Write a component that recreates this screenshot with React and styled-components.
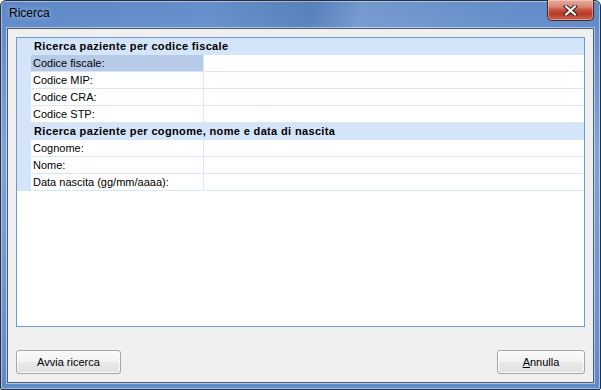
import React from 'react';
import styled, { createGlobalStyle } from 'styled-components';

const GlobalStyle = createGlobalStyle`
    html, body {
        margin: 0;
        padding: 0;
        background: #ffffff;
    }
    * {
        box-sizing: border-box;
    }
`;

const Window = styled.div`
    display: flex;
    flex-direction: column;
    width: 601px;
    height: 390px;
    padding: 0 6px 6px 6px;
    border: 1px solid #27303f;
    border-radius: 6px 6px 2px 2px;
    background: linear-gradient(
        180deg,
        #5c87c6 0px,
        #6690cd 40px,
        #7ea3d8 150px,
        #6e95cf 300px,
        #5f8ac9 390px
    );
    box-shadow: inset 0 0 0 1px rgba(255, 255, 255, 0.45);
    font-family: 'Liberation Sans', Arial, sans-serif;
`;

const TitleBar = styled.div`
    position: relative;
    display: flex;
    align-items: center;
    height: 27px;
    margin: 0 -6px;
    padding-left: 8px;
    background: linear-gradient(
        100deg,
        rgba(255, 255, 255, 0) 0%,
        rgba(255, 255, 255, 0.05) 35%,
        rgba(0, 0, 0, 0.06) 52%,
        rgba(255, 255, 255, 0.14) 60%,
        rgba(255, 255, 255, 0.06) 80%,
        rgba(255, 255, 255, 0) 100%
    );
    border-radius: 5px 5px 0 0;
`;

const Title = styled.span`
    font-size: 12px;
    color: #000000;
    padding-bottom: 3px;
    text-shadow: 0 0 6px rgba(255, 255, 255, 0.6);
`;

const CloseButton = styled.div`
    position: absolute;
    top: -1px;
    right: 6px;
    width: 47px;
    height: 21px;
    display: flex;
    align-items: center;
    justify-content: center;
    border: 1px solid #4b2420;
    border-top: none;
    border-radius: 0 0 5px 5px;
    background: linear-gradient(
        180deg,
        #e6ab9e 0%,
        #d98472 35%,
        #c64f3b 50%,
        #b63a27 70%,
        #cc6650 100%
    );
    box-shadow: inset 0 0 0 1px rgba(255, 220, 210, 0.45);
`;

const Client = styled.div`
    flex: 1;
    display: flex;
    flex-direction: column;
    padding: 8px;
    background: #f0f0f0;
    border: 1px solid #4d5a70;
    box-shadow: 0 0 0 1px rgba(255, 255, 255, 0.5);
`;

const Panel = styled.div`
    height: 290px;
    border: 1px solid #6f9ad6;
    background: #ffffff;
`;

const SectionRow = styled.div`
    height: 17px;
    line-height: 16px;
    padding-left: 17px;
    background: #d5e5f9;
    border-bottom: 1px solid #d5e5f9;
    font-size: 11px;
    font-weight: bold;
    letter-spacing: 0.35px;
    color: #000000;
    white-space: nowrap;
`;

const Row = styled.div`
    display: flex;
    height: 17px;
    border-bottom: 1px solid #d9e6f7;
`;

const Strip = styled.div`
    width: 14px;
    margin-bottom: -1px;
    background: #d5e5f9;
`;

const LabelCell = styled.div`
    width: 173px;
    padding-left: 2px;
    line-height: 16px;
    font-size: 11px;
    color: #000000;
    white-space: nowrap;
    border-right: 1px solid #d9e6f7;
    background: ${(props) => (props.selected ? '#b7cbe8' : '#ffffff')};
`;

const ValueCell = styled.div`
    flex: 1;
`;

const Footer = styled.div`
    display: flex;
    justify-content: space-between;
    margin-top: 23px;
`;

const Button = styled.button`
    width: ${(props) => props.width}px;
    height: 24px;
    padding: 0;
    border: 1px solid #a6a6a6;
    border-radius: 3px;
    background: linear-gradient(
        180deg,
        #fbfbfb 0%,
        #f3f3f3 48%,
        #e9e9e9 52%,
        #e2e2e2 100%
    );
    box-shadow: inset 0 0 0 1px rgba(255, 255, 255, 0.8);
    font-family: 'Liberation Sans', Arial, sans-serif;
    font-size: 11px;
    color: #000000;
`;

const fiscalFields = ['Codice fiscale:', 'Codice MIP:', 'Codice CRA:', 'Codice STP:'];
const personFields = ['Cognome:', 'Nome:', 'Data nascita (gg/mm/aaaa):'];

const FieldRow = ({ label, selected }) => (
    <Row>
        <Strip />
        <LabelCell selected={selected}>{label}</LabelCell>
        <ValueCell />
    </Row>
);

const CloseGlyph = () => (
    <svg width="15" height="11" viewBox="0 0 15 11">
        <path
            d="M3 1.5 L12 9.5 M12 1.5 L3 9.5"
            stroke="#3a2320"
            strokeWidth="4"
            strokeLinecap="square"
        />
        <path
            d="M3 1.5 L12 9.5 M12 1.5 L3 9.5"
            stroke="#ffffff"
            strokeWidth="2"
            strokeLinecap="square"
        />
    </svg>
);

const App = () => (
    <>
        <GlobalStyle />
        <Window>
            <TitleBar>
                <Title>Ricerca</Title>
                <CloseButton>
                    <CloseGlyph />
                </CloseButton>
            </TitleBar>
            <Client>
                <Panel>
                    <SectionRow>Ricerca paziente per codice fiscale</SectionRow>
                    {fiscalFields.map((label, index) => (
                        <FieldRow key={label} label={label} selected={index === 0} />
                    ))}
                    <SectionRow>
                        Ricerca paziente per cognome, nome e data di nascita
                    </SectionRow>
                    {personFields.map((label) => (
                        <FieldRow key={label} label={label} />
                    ))}
                </Panel>
                <Footer>
                    <Button width={105}>Avvia ricerca</Button>
                    <Button width={88}>
                        <u>A</u>nnulla
                    </Button>
                </Footer>
            </Client>
        </Window>
    </>
);

export default App;
